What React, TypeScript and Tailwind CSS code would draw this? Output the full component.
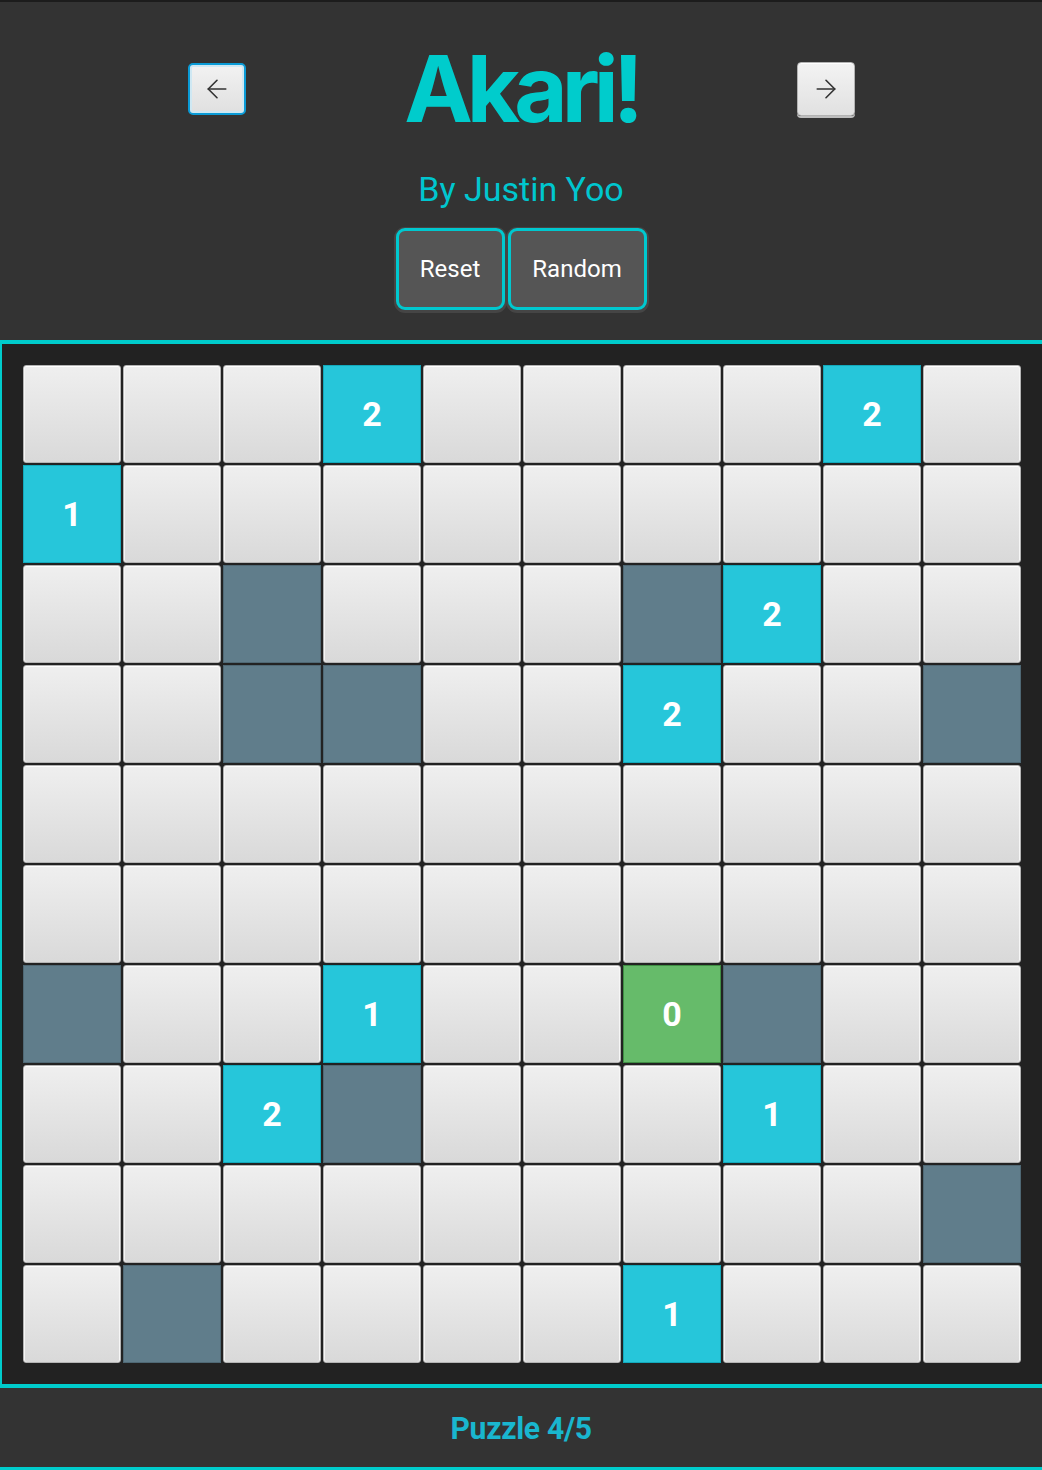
import { ArrowLeft, ArrowRight } from 'lucide-react'

type Cell = '.' | '#' | '0' | '1' | '2' | 'g'

// g = satisfied zero clue (green)
const BOARD: string[] = [
  '...2....2.',
  '1.........',
  '..#...#2..',
  '..##..2..#',
  '..........',
  '..........',
  '#..1..g#..',
  '..2#...1..',
  '.........#',
  '.#....1...',
]

function Tile({ v }: { v: Cell }) {
  if (v === '.') {
    return (
      <div className="h-[98px] rounded-[3px] border border-[#b4b4b4] bg-gradient-to-b from-[#efefef] to-[#d9d9d9] shadow-[inset_0_1px_0_#ffffff,inset_1px_0_0_#f6f6f6,inset_-1px_0_0_#f6f6f6]" />
    )
  }
  if (v === '#') {
    return <div className="h-[98px] border border-[#4f6874] bg-[#607d8b]" />
  }
  if (v === 'g') {
    return (
      <div className="h-[98px] border border-[#3f8d43] bg-[#66bb6a] flex items-center justify-center text-white text-[34px] font-bold">
        0
      </div>
    )
  }
  return (
    <div className="h-[98px] border border-[#13a9bb] bg-[#26c6da] flex items-center justify-center text-white text-[34px] font-bold">
      {v}
    </div>
  )
}

export default function App() {
  return (
    <div className="w-[1042px] bg-[#333333]" style={{ fontFamily: 'Roboto, "Noto Sans", sans-serif' }}>
      <header className="border-t-2 border-[#1c1c1c] pt-[40px] pb-[30px] flex flex-col items-center">
        <div className="flex items-center h-[94px]">
          <button className="w-[58px] h-[52px] flex items-center justify-center rounded-[5px] border-2 border-[#0a9bd6] bg-gradient-to-b from-[#f2f2f2] to-[#e0e0e0] shadow-[inset_0_0_0_2px_#cfe8f3] text-[#333]">
            <ArrowLeft size={30} strokeWidth={1.3} />
          </button>
          <h1
            className="w-[551px] text-center text-[92px] leading-none font-bold tracking-[-0.065em] text-[#00cccc]"
            style={{ fontFamily: 'Inter, Roboto, sans-serif' }}
          >
            Akari!
          </h1>
          <button className="w-[58px] h-[54px] flex items-center justify-center rounded-[4px] border border-[#b3b3b3] bg-gradient-to-b from-[#f3f3f3] to-[#e1e1e1] shadow-[inset_0_1px_0_#ffffff,0_2px_0_#bdbdbd] text-[#333]">
            <ArrowRight size={30} strokeWidth={1.3} />
          </button>
        </div>
        <p className="mt-[33px] h-[40px] leading-[40px] text-[34px] text-[#00c6cf]">By Justin Yoo</p>
        <div className="mt-[19px] flex gap-[3px]">
          <button className="w-[109px] h-[82px] rounded-[9px] border-[3px] border-[#00c8cf] bg-[#555555] text-white text-[24px] shadow-[0_1px_0_2px_#454545]">
            Reset
          </button>
          <button className="w-[139px] h-[82px] rounded-[9px] border-[3px] border-[#00c8cf] bg-[#555555] text-white text-[24px] shadow-[0_1px_0_2px_#454545]">
            Random
          </button>
        </div>
      </header>

      <section className="bg-[#222222] border-t-4 border-b-4 border-l-2 border-[#00cccc] pl-[21px] pr-[21px] pt-[21px] pb-[21px]">
        <div className="grid grid-cols-10 gap-[2px]">
          {BOARD.flatMap((row, r) =>
            row.split('').map((c, i) => <Tile key={`${r}-${i}`} v={c as Cell} />)
          )}
        </div>
      </section>

      <footer className="h-[82px] border-b-[3px] border-[#00cccc] flex items-center justify-center">
        <span className="inline-block text-[32px] font-bold tracking-[-0.01em] scale-x-[0.94] text-[#19b6cf]">
          Puzzle 4/5
        </span>
      </footer>
    </div>
  )
}
